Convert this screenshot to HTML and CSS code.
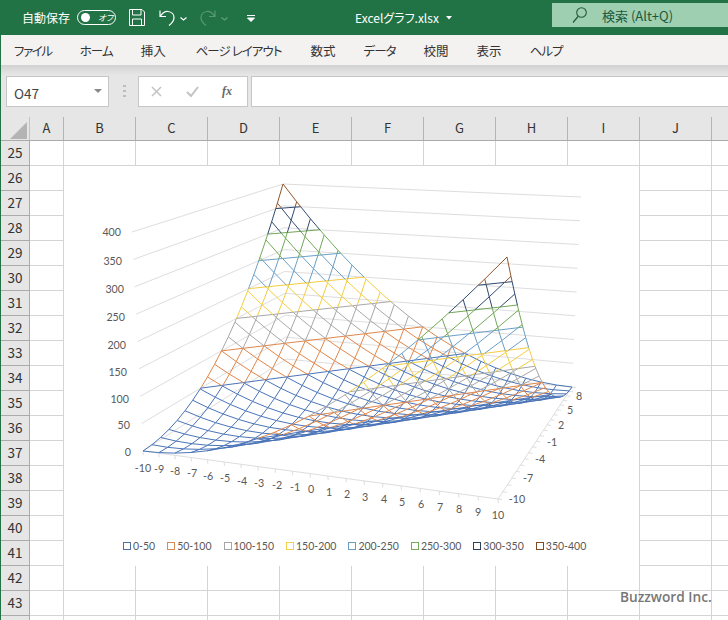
FILE: index.html
```html
<!DOCTYPE html>
<html lang="ja">
<head>
<meta charset="utf-8">
<title>Excelグラフ.xlsx</title>
<link rel="stylesheet" href="styles.css">
</head>
<body>
<div class="app">
  <header class="titlebar">
    <span class="autosave">自動保存</span>
    <span class="toggle"><i class="knob"></i><span class="toggle-text">オフ</span></span>
    <svg class="qa save" width="16" height="17" viewBox="0 0 16 17"><path d="M.5.5h12.5l2.500 2.500v13.500h-15zM3.500.5v5.500h8.500v-5.500M3.500 16.500v-6.500h9v6.500" fill="none" stroke="#fff"/></svg>
    <svg class="qa undo" width="16" height="18" viewBox="0 0 16 18"><path d="M1 1.500v6h6M1.500 7c2-3 4.500-4.800 7.500-4.500 3.500.4 6 3 6 6 0 3-1.800 5.500-5 8" fill="none" stroke="#fff" stroke-width="1.200"/></svg>
    <svg class="qa chev" width="7" height="4" viewBox="0 0 7 4"><path d="M.5.500l3 2.500 3-2.500" fill="none" stroke="#fff" stroke-width="1.200"/></svg>
    <svg class="qa redo" width="16" height="18" viewBox="0 0 16 18"><path d="M15 1.500v6h-6M14.500 7c-2-3-4.500-4.800-7.500-4.500-3.500.4-6 3-6 6 0 3 1.800 5.500 5 8" fill="none" stroke="#5f9d7b" stroke-width="1.200"/></svg>
    <svg class="qa chev2" width="7" height="4" viewBox="0 0 7 4"><path d="M.5.500l3 2.500 3-2.500" fill="none" stroke="#5f9d7b" stroke-width="1.200"/></svg>
    <svg class="qa custom" width="8" height="7" viewBox="0 0 8 7"><path d="M0 .5h8M.5 3l3.500 3.500 3.500-3.500z" fill="#fff" stroke="#fff" stroke-width="1"/></svg>
    <span class="filename">Excelグラフ.xlsx</span>
    <svg class="qa filearrow" width="6" height="4" viewBox="0 0 6 4"><path d="M0 0h6l-3 3.500z" fill="#fff"/></svg>
    <div class="search">
      <svg width="15" height="16" viewBox="0 0 15 16"><circle cx="9.500" cy="5.500" r="4.800" fill="none" stroke="#20593a" stroke-width="1.100"/><path d="M6 9.500l-5 6" stroke="#20593a" stroke-width="1.200"/></svg>
      <span>検索 (Alt+Q)</span>
    </div>
  </header>

  <nav class="tabs">
    <span class="tightest">ファイル</span><span class="tight">ホーム</span><span>挿入</span><span class="tight layout-tab">ページ レイアウト</span><span class="after-layout">数式</span><span class="tight">データ</span><span>校閲</span><span>表示</span><span class="tight">ヘルプ</span>
  </nav>

  <section class="formula">
    <div class="namebox"><span>O47</span><svg width="8" height="4" viewBox="0 0 8 4"><path d="M0 0h8l-4 4z" fill="#8a8a8a"/></svg></div>
    <svg class="dots" width="3" height="12" viewBox="0 0 3 12"><path d="M0 0h3v2h-3zM0 5h3v2h-3zM0 10h3v2h-3z" fill="#bdbdbd"/></svg>
    <div class="fxbox">
      <svg width="11" height="11" viewBox="0 0 11 11"><path d="M1 1l9 9M10 1l-9 9" stroke="#c2c2c2" stroke-width="1.500"/></svg>
      <svg width="13" height="11" viewBox="0 0 13 11"><path d="M1 6l4 4 7-9" fill="none" stroke="#c2c2c2" stroke-width="2"/></svg>
      <span class="fx">fx</span>
    </div>
    <div class="input"></div>
  </section>

  <div class="colhead">
    <div class="corner"><svg width="17" height="17" viewBox="0 0 17 17"><path d="M17 0v17h-17z" fill="#b4b4b4"/></svg></div>
    <span class="col-a">A</span><span>B</span><span>C</span><span>D</span><span>E</span><span>F</span><span>G</span><span>H</span><span>I</span><span>J</span><span class="col-k"></span>
  </div>

  <main class="sheet">
    <div class="rowhead">
      <span>25</span><span>26</span><span>27</span><span>28</span><span>29</span><span>30</span><span>31</span><span>32</span><span>33</span><span>34</span><span>35</span><span>36</span><span>37</span><span>38</span><span>39</span><span>40</span><span>41</span><span>42</span><span>43</span><span></span>
    </div>
    <div class="cells"></div>

    <figure class="chart">
      <svg class="plot" width="575" height="366" viewBox="64 166 575 366">
        <g id="walls" class="walls"></g>
        <g id="mesh"></g>
        <g class="zlabels">
          <text x="121" y="236">400</text><text x="122" y="265">350</text><text x="124" y="293">300</text><text x="125" y="321">250</text><text x="126" y="349">200</text><text x="127" y="376">150</text><text x="129" y="403">100</text><text x="130" y="429">50</text><text x="131" y="456">0</text>
        </g>
        <g class="axlabels">
          <text x="143" y="472">-10</text><text x="159" y="473">-9</text><text x="175" y="475">-8</text><text x="192" y="477">-7</text><text x="208" y="480">-6</text><text x="225" y="482">-5</text><text x="242" y="485">-4</text><text x="259" y="487">-3</text><text x="277" y="489">-2</text><text x="295" y="491">-1</text><text x="311" y="493">0</text><text x="329" y="496">1</text><text x="347" y="498">2</text><text x="365" y="501">3</text><text x="384" y="503">4</text><text x="402" y="506">5</text><text x="421" y="508">6</text><text x="440" y="511">7</text><text x="459" y="513">8</text><text x="478" y="516">9</text><text x="498" y="519">10</text>
          <text x="579" y="400">8</text><text x="570" y="414">5</text><text x="561" y="429">2</text><text x="552" y="446">-1</text><text x="540" y="463">-4</text><text x="528" y="482">-7</text><text x="517" y="503">-10</text>
        </g>
      </svg>
      <figcaption class="legend">
        <span class="item"><i class="k0"></i>0-50</span>
        <span class="item"><i class="k1"></i>50-100</span>
        <span class="item"><i class="k2"></i>100-150</span>
        <span class="item"><i class="k3"></i>150-200</span>
        <span class="item"><i class="k4"></i>200-250</span>
        <span class="item"><i class="k5"></i>250-300</span>
        <span class="item"><i class="k6"></i>300-350</span>
        <span class="item"><i class="k7"></i>350-400</span>
      </figcaption>
    </figure>

    <div class="watermark">Buzzword Inc.</div>
  </main>
</div>
<script src="script.js"></script>
</body>
</html>
```
FILE: styles.css
```css
* { box-sizing: border-box; }
html, body { margin: 0; padding: 0; }
body { width: 728px; height: 620px; overflow: hidden; background: #fff; font-family: "Noto Sans CJK JP", "Noto Sans", sans-serif; font-feature-settings: "palt"; color: #333; }
.app { width: 728px; height: 620px; display: flex; flex-direction: column; border-left: 1px solid #217346; overflow: hidden; }

.titlebar { height: 35px; flex: none; background: #217346; color: #fff; display: flex; align-items: center; font-size: 12px; position: relative; }
.autosave { margin-left: 21px; width: 48px; white-space: nowrap; }
.toggle { margin-left: 7px; width: 39px; height: 15px; border: 1px solid #fff; border-radius: 8px; display: flex; align-items: center; padding-left: 3px; }
.knob { width: 9px; height: 9px; border-radius: 50%; background: #fff; }
.toggle-text { font-size: 8.5px; margin-left: 8px; line-height: 1; font-style: italic; }
.qa { flex: none; display: block; }
.save { margin-left: 13px; }
.undo { margin-left: 14px; }
.chev { margin-left: 5px; margin-top: 2px; }
.redo { margin-left: 13px; opacity: .9; }
.chev2 { margin-left: 5px; margin-top: 2px; }
.custom { margin-left: 19px; margin-top: 2px; }
.filename { margin-left: 100px; width: 82px; white-space: nowrap; font-size: 12px; }
.filearrow { margin-left: 9px; }
.search { margin-left: 100px; flex: 1; height: 24px; margin-top: -5px; background: #9fcfb1; color: #20593a; display: flex; align-items: center; padding-left: 20px; gap: 15px; font-size: 13px; }

.tabs { height: 30px; flex: none; background: #f3f2f1; display: flex; align-items: center; gap: 28px; padding-left: 13px; font-size: 12.5px; color: #333; white-space: nowrap; }
.tight { letter-spacing: -.95px; }
.tightest { letter-spacing: -1.4px; }
.layout-tab { margin-left: 2px; }
.after-layout { margin-left: 1px; }

.formula { height: 52px; flex: none; background: linear-gradient(to bottom, #d2d2d2 0, #e6e6e6 10px); display: flex; align-items: flex-start; padding: 11px 0 0 5px; }
.namebox { width: 103px; height: 31px; background: #fff; border: 1px solid #c6c6c6; display: flex; align-items: center; justify-content: space-between; padding: 2px 6px 0 7px; font-size: 13.5px; color: #444; }
.namebox svg { margin-top: -3px; }
.dots { margin: 9px 0 0 14px; }
.fxbox { margin-left: 12px; width: 110px; height: 31px; background: #fff; border: 1px solid #c6c6c6; display: flex; align-items: center; padding-left: 12px; gap: 24px; }
.fx { font-family: "Liberation Serif", serif; font-style: italic; font-weight: 700; font-size: 12px; color: #666; margin-left: -1px; }
.input { margin-left: 3px; flex: 1; height: 31px; background: #fff; border: 1px solid #c6c6c6; border-right: 0; }

.colhead { height: 24px; flex: none; background: #e6e6e6; border-bottom: 1px solid #ababab; display: flex; font-size: 13px; color: #333; line-height: 22px; }
.corner { width: 29px; flex: none; border-right: 1px solid #c4c4c4; padding: 5px 0 0 9px; }
.colhead span { width: 72px; flex: none; text-align: center; border-right: 1px solid #b4b4b4; margin-top: 0; }
.colhead .col-a { width: 34px; }
.colhead .col-k { border-right: 0; }

.sheet { flex: 1; position: relative; display: flex; min-height: 0; overflow: hidden; }
.rowhead { width: 29px; flex: none; background: #e6e6e6; border-right: 1px solid #ababab; display: flex; flex-direction: column; }
.rowhead span { height: 25px; flex: none; border-bottom: 1px solid #ababab; text-align: center; font-size: 13.5px; line-height: 23px; color: #333; }
.cells { flex: 1; background-color: #fff; background-image: linear-gradient(to right, #d4d4d4 1px, transparent 1px), linear-gradient(to bottom, transparent 24px, #d4d4d4 24px); background-size: 72px 100%, 100% 25px; background-position: 33px 0, 0 0; background-repeat: repeat-x, repeat-y; }

.chart { position: absolute; left: 63px; top: 25px; width: 575px; height: 400px; margin: 0; background: #fff; display: flex; flex-direction: column; }
.plot { display: block; flex: none; }
.walls path { fill: none; stroke: #d9d9d9; stroke-width: .9; }
.zlabels text { font-family: Lato, sans-serif; font-size: 10.7px; fill: #595959; text-anchor: end; }
.axlabels text { font-family: Lato, sans-serif; font-size: 10.7px; fill: #595959; text-anchor: middle; }
.legend { display: flex; align-items: center; font-family: Lato, sans-serif; font-size: 10.5px; color: #595959; height: 27px; padding-left: 59px; gap: 12px; }
.item { display: flex; align-items: center; gap: 2px; white-space: nowrap; }
.item i { width: 8px; height: 8px; border: 1px solid; display: block; }
.k0 { border-color: #4e719f !important; }
.k1 { border-color: #d98b55 !important; }
.k2 { border-color: #a5a5a5 !important; }
.k3 { border-color: #f3cf4a !important; }
.k4 { border-color: #6a9dbd !important; }
.k5 { border-color: #76a95c !important; }
.k6 { border-color: #2c4259 !important; }
.k7 { border-color: #7d4a21 !important; }

.watermark { position: absolute; left: 619px; top: 446px; font-family: "Open Sans", sans-serif; font-weight: 600; font-size: 13.7px; color: #777; white-space: nowrap; line-height: 20px; }
```
FILE: script.js
```js
(function () {
  var NS = 'http://www.w3.org/2000/svg';

  function homography(p0, p1, p2, p3) {
    var dx1 = p1[0] - p2[0], dx2 = p3[0] - p2[0], sx = p0[0] - p1[0] + p2[0] - p3[0];
    var dy1 = p1[1] - p2[1], dy2 = p3[1] - p2[1], sy = p0[1] - p1[1] + p2[1] - p3[1];
    var det = dx1 * dy2 - dx2 * dy1;
    var g = (sx * dy2 - dx2 * sy) / det, h = (dx1 * sy - sx * dy1) / det;
    var a = p1[0] - p0[0] + g * p1[0], b = p3[0] - p0[0] + h * p3[0], c = p0[0];
    var d = p1[1] - p0[1] + g * p1[1], e = p3[1] - p0[1] + h * p3[1], f = p0[1];
    return function (u, v) {
      var w = g * u + h * v + 1;
      return [(a * u + b * v + c) / w, (d * u + e * v + f) / w];
    };
  }

  var floor = homography([143, 451], [498, 499], [572, 387], [286, 359]);
  var top = homography([132, 232], [507, 257], [581, 197], [283, 184]);

  function project(x, y, z) {
    var u = (x + 10) / 20, v = (y + 10) / 20, t = z / 400;
    var f = floor(u, v), k = top(u, v);
    return [f[0] + (k[0] - f[0]) * t, f[1] + (k[1] - f[1]) * t];
  }
  function pt(p) { return p[0].toFixed(2) + ' ' + p[1].toFixed(2); }
  function seg(a, b) { return 'M' + pt(a) + 'L' + pt(b); }
  function Z(x, y) { return (x - y) * (x - y); }

  var colors = ['#4a74b8', '#e0874a', '#a8a8a8', '#f4cd3f', '#6a9fc8', '#72a858', '#2f4a70', '#93552a'];
  var bands = colors.map(function () { return ''; });
  function bandOf(z) { return Math.max(0, Math.min(7, Math.floor(z / 50))); }

  function addEdge(x0, y0, x1, y1) {
    var z0 = Z(x0, y0), z1 = Z(x1, y1), stops = [0, 1], L;
    for (L = 50; L < 400; L += 50) {
      if ((z0 < L) !== (z1 < L) && z0 !== L && z1 !== L) stops.push((L - z0) / (z1 - z0));
    }
    stops.sort(function (a, b) { return a - b; });
    for (var i = 0; i < stops.length - 1; i++) {
      var s = stops[i], e = stops[i + 1], m = (s + e) / 2;
      var zs = z0 + (z1 - z0) * s, ze = z0 + (z1 - z0) * e;
      var a = project(x0 + (x1 - x0) * s, y0 + (y1 - y0) * s, zs);
      var b = project(x0 + (x1 - x0) * e, y0 + (y1 - y0) * e, ze);
      bands[bandOf(z0 + (z1 - z0) * m)] += seg(a, b);
    }
  }

  var x, y, L;
  for (x = -10; x <= 10; x++) {
    for (y = -10; y <= 10; y++) {
      if (x < 10) addEdge(x, y, x + 1, y);
      if (y < 10) addEdge(x, y, x, y + 1);
    }
  }

  function crossing(x0, y0, x1, y1, lev) {
    var z0 = Z(x0, y0), z1 = Z(x1, y1);
    if ((z0 < lev) === (z1 < lev)) return null;
    var t = (lev - z0) / (z1 - z0);
    return project(x0 + (x1 - x0) * t, y0 + (y1 - y0) * t, lev);
  }
  for (L = 50; L < 400; L += 50) {
    var lev = L - 0.001;
    for (x = -10; x < 10; x++) {
      for (y = -10; y < 10; y++) {
        var pts = [
          crossing(x, y, x + 1, y, lev), crossing(x + 1, y, x + 1, y + 1, lev),
          crossing(x + 1, y + 1, x, y + 1, lev), crossing(x, y + 1, x, y, lev)
        ].filter(Boolean);
        if (pts.length === 2) bands[L / 50 - 1] += seg(pts[0], pts[1]);
      }
    }
  }

  var mesh = document.getElementById('mesh');
  bands.forEach(function (d, i) {
    var p = document.createElementNS(NS, 'path');
    p.setAttribute('d', d);
    p.setAttribute('fill', 'none');
    p.setAttribute('stroke', colors[i]);
    p.setAttribute('stroke-width', '1');
    mesh.appendChild(p);
  });

  var w = '', z;
  for (z = 0; z <= 400; z += 50) {
    w += seg(project(-10, -10, z), project(-10, 10, z));
    w += seg(project(-10, 10, z), project(10, 10, z));
  }
  w += seg(project(-10, -10, 0), project(10, -10, 0));
  w += seg(project(10, -10, 0), project(10, 10, 0));
  var i;
  for (i = -10; i <= 10; i++) {
    var q = project(i, -10, 0);
    w += 'M' + pt(q) + 'L' + pt([q[0] + 0.3, q[1] + 4]);
    var r = project(10, i, 0);
    w += 'M' + pt(r) + 'L' + pt([r[0] + 4, r[1] + 0.5]);
  }
  var wp = document.createElementNS(NS, 'path');
  wp.setAttribute('d', w);
  document.getElementById('walls').appendChild(wp);
})();
```
